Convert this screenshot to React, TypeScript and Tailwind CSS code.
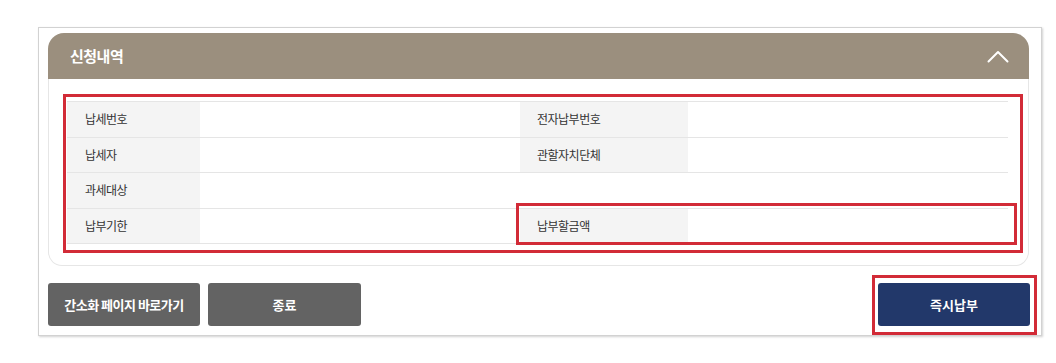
const rows = [
  { l1: '납세번호', l2: '전자납부번호' },
  { l1: '납세자', l2: '관할자치단체' },
  { l1: '과세대상', l2: null },
  { l1: '납부기한', l2: '납부할금액' },
];

function Chevron() {
  return (
    <svg width="22" height="13" viewBox="0 0 22 13" fill="none">
      <polyline points="1.5,11.5 11,2 20.5,11.5" stroke="#fff" strokeWidth="2" strokeLinecap="round" strokeLinejoin="round" />
    </svg>
  );
}

export default function App() {
  return (
    <div
      className="w-[1056px] h-[363px] bg-white pl-[38px] pt-[27px]"
      style={{ fontFamily: '"Noto Sans CJK KR", "Noto Sans", sans-serif' }}
    >
      <div className="w-[1004px] border border-[#d2d2d2] shadow-[1px_1px_2px_rgba(0,0,0,0.18)] bg-white pl-[9px] pr-[12px] pt-[5px] pb-[9px]">
        {/* 신청내역 카드 */}
        <div>
          <div className="h-[46px] bg-[#9b8f7e] rounded-t-[16px] flex items-center justify-between pl-[22px] pr-[20px]">
            <span className="text-white text-[15px] font-bold tracking-[-0.5px]">신청내역</span>
            <Chevron />
          </div>
          <div className="border-x border-b border-[#e6e6e6] rounded-b-[14px] pl-[18px] pr-[20px] pt-[22px] pb-[21px]">
            <div className="relative">
              <table className="w-[941px] border-collapse text-[12px] text-[#333] tracking-[-0.5px]">
                <tbody>
                  {rows.map((r) => (
                    <tr key={r.l1} className="h-[35.5px] border-t border-b border-[#e5e5e5]">
                      <td className="w-[133px] bg-[#f4f4f4] pl-[18px]">{r.l1}</td>
                      {r.l2 ? (
                        <>
                          <td className="w-[320px]" />
                          <td className="w-[168px] bg-[#f4f4f4] pl-[17px]">{r.l2}</td>
                          <td className="w-[320px]" />
                        </>
                      ) : (
                        <td colSpan={3} />
                      )}
                    </tr>
                  ))}
                </tbody>
              </table>
              {/* annotation boxes */}
              <div className="absolute -top-[7px] -left-[4px] -right-[15px] -bottom-[9px] border-[3px] border-[#d22b37] pointer-events-none" />
              <div className="absolute top-[102px] left-[449px] -right-[9px] -bottom-[1px] border-[3px] border-[#d22b37] pointer-events-none" />
            </div>
          </div>
        </div>

        {/* 버튼 */}
        <div className="mt-[17px] flex items-center justify-between">
          <div className="flex gap-[8px]">
            <button className="w-[152px] h-[43px] rounded-[3px] bg-[#636363] text-white text-[13px] font-bold tracking-[-0.5px]">
              간소화 페이지 바로가기
            </button>
            <button className="w-[153px] h-[43px] rounded-[3px] bg-[#636363] text-white text-[13px] font-bold">
              종료
            </button>
          </div>
          <div className="relative -mr-px">
            <button className="w-[152px] h-[43px] rounded-[3px] bg-[#22386a] text-white text-[13px] font-bold">
              즉시납부
            </button>
            <div className="absolute -top-[8px] -left-[6px] -right-[7px] -bottom-[9px] border-[3px] border-[#d22b37] pointer-events-none" />
          </div>
        </div>
      </div>
    </div>
  );
}
